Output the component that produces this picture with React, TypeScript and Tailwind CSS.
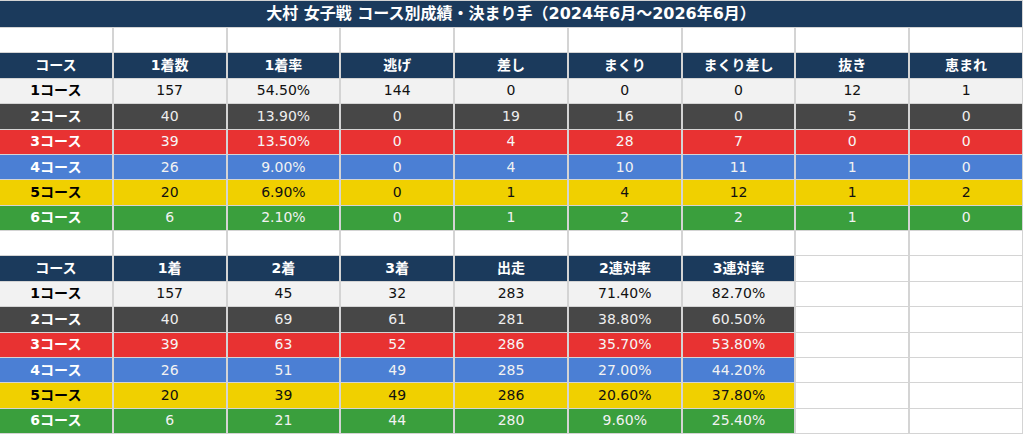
const FONT = "font-['DejaVu_Sans','Noto_Sans_CJK_JP',sans-serif]";

const HEAD1 = ["コース", "1着数", "1着率", "逃げ", "差し", "まくり", "まくり差し", "抜き", "恵まれ"];
const HEAD2 = ["コース", "1着", "2着", "3着", "出走", "2連対率", "3連対率"];

const ROWS1 = [
  ["157", "54.50%", "144", "0", "0", "0", "12", "1"],
  ["40", "13.90%", "0", "19", "16", "0", "5", "0"],
  ["39", "13.50%", "0", "4", "28", "7", "0", "0"],
  ["26", "9.00%", "0", "4", "10", "11", "1", "0"],
  ["20", "6.90%", "0", "1", "4", "12", "1", "2"],
  ["6", "2.10%", "0", "1", "2", "2", "1", "0"],
];

const ROWS2 = [
  ["157", "45", "32", "283", "71.40%", "82.70%"],
  ["40", "69", "61", "281", "38.80%", "60.50%"],
  ["39", "63", "52", "286", "35.70%", "53.80%"],
  ["26", "51", "49", "285", "27.00%", "44.20%"],
  ["20", "39", "49", "286", "20.60%", "37.80%"],
  ["6", "21", "44", "280", "9.60%", "25.40%"],
];

// course colours: background, label colour, value colour
const COURSE = [
  { bg: "bg-[#f2f2f2]", label: "text-black", value: "text-[#111]" },
  { bg: "bg-[#474747]", label: "text-white", value: "text-[#eeeeee]" },
  { bg: "bg-[#e83232]", label: "text-white", value: "text-[#f6f6f6]" },
  { bg: "bg-[#4b7fd4]", label: "text-white", value: "text-[#f2f2f2]" },
  { bg: "bg-[#f0d000]", label: "text-black", value: "text-[#111]" },
  { bg: "bg-[#3a9f3d]", label: "text-white", value: "text-[#f2f2f2]" },
];

function Cell({ className, children }: { className: string; children?: React.ReactNode }) {
  return (
    <div className={`flex items-center justify-center overflow-hidden whitespace-nowrap ${className}`}>
      {children}
    </div>
  );
}

function HeadRow({ labels }: { labels: string[] }) {
  return (
    <>
      {labels.map((h, i) => (
        <Cell key={i} className="bg-[#1b3a5c] text-white text-[14px] font-bold">
          {h}
        </Cell>
      ))}
    </>
  );
}

function DataRows({ rows, fill }: { rows: string[][]; fill: number }) {
  return (
    <>
      {rows.map((row, r) => {
        const c = COURSE[r];
        return (
          <div key={r} className="contents">
            <Cell className={`${c.bg} ${c.label} text-[14px] font-bold`}>{r + 1}コース</Cell>
            {row.map((v, i) => (
              <Cell key={i} className={`${c.bg} ${c.value} text-[14px]`}>
                {v}
              </Cell>
            ))}
            {Array.from({ length: fill }).map((_, i) => (
              <Cell key={`f${i}`} className="bg-white" />
            ))}
          </div>
        );
      })}
    </>
  );
}

function BlankRow() {
  return (
    <>
      {Array.from({ length: 9 }).map((_, i) => (
        <Cell key={i} className="bg-white" />
      ))}
    </>
  );
}

export default function App() {
  return (
    <div className={`w-[1024px] h-[434px] bg-white ${FONT}`}>
      <div className="grid h-full w-[1023px] grid-cols-[repeat(9,minmax(0,1fr))] grid-rows-[26px_repeat(16,minmax(0,1fr))] gap-x-[2px] gap-y-[1px] bg-[#d4d4d4] pt-[1px] pb-[1px] pr-[1px]">
        <Cell className="col-span-9 bg-[#1b3a5c] text-white text-[16px] font-bold">
          大村 女子戦 コース別成績・決まり手（2024年6月～2026年6月）
        </Cell>
        <BlankRow />
        <HeadRow labels={HEAD1} />
        <DataRows rows={ROWS1} fill={0} />
        <BlankRow />
        <HeadRow labels={HEAD2} />
        <Cell className="bg-white" />
        <Cell className="bg-white" />
        <DataRows rows={ROWS2} fill={2} />
      </div>
    </div>
  );
}
